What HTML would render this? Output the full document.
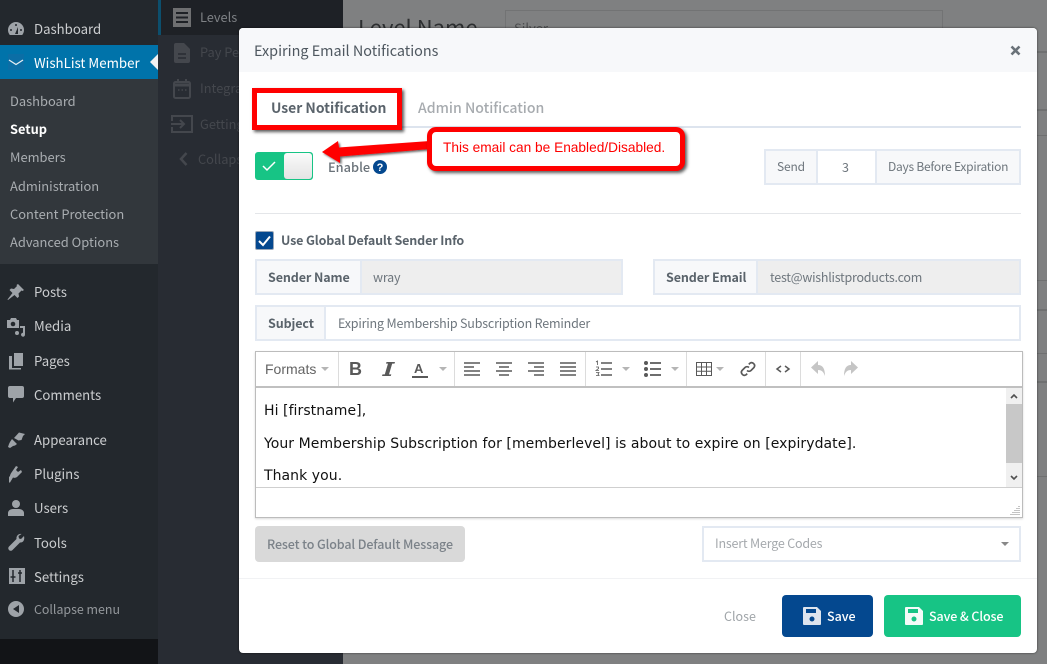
<!DOCTYPE html>
<html><head><meta charset="utf-8"><style>
html,body{margin:0;padding:0;width:1047px;height:664px;overflow:hidden;background:#7f8081}
body{position:relative;font-family:"Noto Sans CJK JP","Liberation Sans",sans-serif}
.a,.t{position:absolute}
.t{white-space:nowrap;line-height:20px}
.s{font-size:13.2px;color:#ccced0}
.u{font-size:12.9px;color:#a9adb1}
.w{font-size:12.8px;color:#44474d}
.box{position:absolute;box-sizing:border-box;border:2px solid #e3e9f2}
.lab{position:absolute;box-sizing:border-box;background:#f7f8fa;border:2px solid #e3e9f2}
.m{font-size:12.5px;color:#6e767d;letter-spacing:-.18px}
.b{font-size:12.5px;font-weight:700;color:#5a636b;letter-spacing:-.1px}
.e{position:absolute;left:264px;font-family:'DejaVu Sans',sans-serif;font-size:14px;letter-spacing:.06px;line-height:18px;color:#111;white-space:nowrap}
svg{position:absolute;overflow:visible}
</style></head><body>
<!-- background page -->
<div class="a" style="left:343px;top:0;width:704px;height:664px;background:#7f8081"></div>
<div class="t" style="left:358px;top:12px;font-size:22px;color:#2d2f31;line-height:30px">Level Name</div>
<div class="a" style="left:505px;top:10px;width:436px;height:30px;border:1px solid #727374"></div>
<div class="t" style="left:514px;top:18px;font-size:13px;color:#4d4e50">Silver</div>
<div class="a" style="left:1037px;top:51px;width:10px;height:2px;background:#6f7071"></div>
<div class="a" style="left:1037px;top:109px;width:10px;height:2px;background:#6f7071"></div>
<div class="a" style="left:1037px;top:135px;width:10px;height:1px;background:#6f7071"></div>
<div class="a" style="left:1037px;top:280px;width:10px;height:1px;background:#6f7071"></div>
<div class="a" style="left:1037px;top:309px;width:10px;height:2px;background:#6f7071"></div>
<div class="a" style="left:1037px;top:353px;width:10px;height:1px;background:#6f7071"></div>
<div class="a" style="left:1037px;top:381px;width:10px;height:2px;background:#6f7071"></div>
<div class="a" style="left:1037px;top:476px;width:10px;height:1px;background:#6f7071;"></div>
<!-- wp sidebar -->
<div class="a" style="left:0;top:0;width:158px;height:639px;background:#23282d"></div>
<div class="a" style="left:0;top:639px;width:158px;height:25px;background:#121417"></div>
<div class="a" style="left:158px;top:0;width:185px;height:664px;background:#282c33"></div>
<div class="a" style="left:158px;top:0;width:185px;height:35px;background:#1e2126"></div>
<div class="a" style="left:158px;top:0;width:3px;height:35px;background:#0c4f6d"></div>
<div class="a" style="left:0;top:45px;width:158px;height:34px;background:#0073aa"></div>
<div class="a" style="left:0;top:79px;width:158px;height:185px;background:#32373c"></div>
<svg style="left:150px;top:54px" width="8" height="16"><path d="M8 0L0 8L8 16Z" fill="#f1f1f1"/></svg>
<svg style="left:7px;top:20px" width="18" height="18" viewBox="0 0 18 18"><path d="M9 2a8 8 0 0 0-8 8c0 2 .7 3.600 1.800 5h12.400A8 8 0 0 0 17 10a8 8 0 0 0-8-8z" fill="#9ea3a8"/><path d="M8 14l3-7 0 7z" fill="#23282d"/><circle cx="4" cy="10" r="1" fill="#23282d"/><circle cx="9" cy="5" r="1" fill="#23282d"/><circle cx="14" cy="10" r="1" fill="#23282d"/></svg>
<div class="t s" style="left:34px;top:19px">Dashboard</div>
<div class="a" style="left:8px;top:54px;width:16px;height:16px;background:#0b6ea6"></div>
<svg style="left:8px;top:54px" width="16" height="16"><path d="M1 6L8 10.500L15 6" fill="none" stroke="#e6eef3" stroke-width="1.300"/></svg>
<div class="t" style="left:34px;top:53px;font-size:13.3px;color:#fff">WishList Member</div>
<div class="t u" style="left:10px;top:91px">Dashboard</div>
<div class="t" style="left:10px;top:119px;font-size:12.8px;font-weight:700;color:#fff">Setup</div>
<div class="t u" style="left:10px;top:147px">Members</div>
<div class="t u" style="left:10px;top:176px">Administration</div>
<div class="t u" style="left:10px;top:204px">Content Protection</div>
<div class="t u" style="left:10px;top:232px">Advanced Options</div>
<svg style="left:7px;top:283px" width="18" height="18" viewBox="0 0 18 18"><path d="M11 1l6 6-1.500 1-1-.5-3 3 .5 3-1.500 1.500-3-3L1 17l-.5-.5L5.500 10l-3-3L4 5.500l3 .5 3-3-.5-1z" fill="#9ea3a8"/></svg>
<svg style="left:7px;top:317px" width="19" height="19" viewBox="0 0 19 19"><path d="M0 3h3l1-2h5l1 2h2v8H0z" fill="#9ea3a8"/><circle cx="6" cy="7" r="2.300" fill="#23282d"/><path d="M13 9h5v8.500a2 2 0 1 1-2-1.800V11h-3z" fill="#9ea3a8"/><circle cx="10" cy="16" r="2" fill="#9ea3a8"/></svg>
<svg style="left:8px;top:352px" width="16" height="18" viewBox="0 0 16 18"><path d="M6 1h9v13H6z" fill="#9ea3a8"/><path d="M1 4h3v12h9v1.500H1z" fill="#9ea3a8"/></svg>
<svg style="left:8px;top:386px" width="16" height="17" viewBox="0 0 16 17"><path d="M2 0h12a2 2 0 0 1 2 2v8a2 2 0 0 1-2 2H8l-3 4.500V12H2a2 2 0 0 1-2-2V2a2 2 0 0 1 2-2z" fill="#9ea3a8"/></svg>
<svg style="left:7px;top:431px" width="18" height="18" viewBox="0 0 18 18"><path d="M7 7L12 1.500 18 3 16 5l-1.500 4-3 .5zM5 8l5 5-2 1.500-2 .5-3 2-2-1 1-3 1-2z" fill="#9ea3a8"/></svg>
<svg style="left:8px;top:465px" width="17" height="18" viewBox="0 0 17 18"><path d="M8 1l2 1-2 3 2 2 3-2 1 2-5 5c-1.500 1-3 1-4 .5L2 17.500H1V12l1-1c0-1 .5-2 1.500-3.500z" fill="#9ea3a8"/></svg>
<svg style="left:8px;top:499px" width="16" height="18" viewBox="0 0 16 18"><circle cx="8" cy="5" r="4" fill="#9ea3a8"/><path d="M0 17v-3c0-2 2-4 5-4h6c3 0 5 2 5 4v3z" fill="#9ea3a8"/></svg>
<svg style="left:8px;top:534px" width="17" height="17" viewBox="0 0 17 17"><path d="M16 2l-3 3-2-.5L10.500 2 13.500 0C11 -.5 8 1.500 8.500 5L1 12.500c-1 1-1 2.500 0 3.500s2.500 1 3.500 0L12 8.500c3 .5 5-2.500 4-6.500z" fill="#9ea3a8"/></svg>
<svg style="left:9px;top:568px" width="16" height="16" viewBox="0 0 16 16"><rect width="16" height="16" fill="#9ea3a8"/><path d="M4 2v12M4 9h-2.500M4 9h2.500M11 2v12M9 5h4" stroke="#23282d" stroke-width="1.500"/></svg>
<svg style="left:8px;top:601px" width="16" height="16" viewBox="0 0 16 16"><circle cx="8" cy="8" r="8" fill="#9ea3a8"/><path d="M11 4v8L5 8z" fill="#23282d"/></svg>
<div class="t s" style="left:34px;top:282px">Posts</div>
<div class="t s" style="left:34px;top:316px">Media</div>
<div class="t s" style="left:34px;top:351px">Pages</div>
<div class="t s" style="left:34px;top:385px">Comments</div>
<div class="t s" style="left:34px;top:430px">Appearance</div>
<div class="t s" style="left:34px;top:464px">Plugins</div>
<div class="t s" style="left:34px;top:498px">Users</div>
<div class="t s" style="left:34px;top:533px">Tools</div>
<div class="t s" style="left:34px;top:567px">Settings</div>
<div class="t s" style="left:34px;top:599px;font-size:12.4px;color:#94989c">Collapse menu</div>
<!-- wl sidebar -->
<svg style="left:173px;top:8px" width="18" height="19"><rect width="18" height="19" fill="#6e6f71"/><path d="M3 5h12M3 9.500h12M3 14h12" stroke="#1e2126" stroke-width="2"/></svg>
<div class="t w" style="left:200px;top:7px;color:#7e8185">Levels</div>
<svg style="left:174px;top:43px" width="16" height="20" viewBox="0 0 16 20"><path d="M2 0h8l6 6v12a2 2 0 0 1-2 2H2a2 2 0 0 1-2-2V2a2 2 0 0 1 2-2z" fill="#44474d"/><path d="M4 11h8M4 15h8" stroke="#282c33" stroke-width="1.500"/></svg>
<div class="t w" style="left:200px;top:42px">Pay Per</div>
<svg style="left:173px;top:79px" width="18" height="20" viewBox="0 0 18 20"><rect x="1" y="3" width="16" height="16" rx="1.500" fill="none" stroke="#44474d" stroke-width="2"/><path d="M1 6h16" stroke="#44474d" stroke-width="3"/><path d="M5 0v4M13 0v4" stroke="#44474d" stroke-width="2"/><path d="M5 11h1.500M8.500 11h1.500M12 11h1.500" stroke="#44474d" stroke-width="1.500"/></svg>
<div class="t w" style="left:200px;top:78px">Integra</div>
<svg style="left:171px;top:115px" width="22" height="18" viewBox="0 0 22 18"><path d="M1 6V1h20v16H1v-5" fill="none" stroke="#44474d" stroke-width="2"/><path d="M0 9h13M9 5l4 4-4 4" fill="none" stroke="#44474d" stroke-width="2"/></svg>
<div class="t w" style="left:200px;top:114px">Getting</div>
<svg style="left:179px;top:152px" width="9" height="14"><path d="M7.500 1L2 7l5.500 6" fill="none" stroke="#44474d" stroke-width="2.500"/></svg>
<div class="t w" style="left:198px;top:149px">Collapse</div>
<!-- modal -->
<div class="a" style="left:239px;top:28px;width:798px;height:625px;background:#fff;border-radius:4px;overflow:hidden;box-shadow:0 0 2px rgba(0,0,0,.6)">
<div class="a" style="left:0;top:0;width:798px;height:44px;background:#f7f8fa"></div>
<div class="a" style="left:0;top:550px;width:798px;height:1px;background:#f1f2f4"></div>
</div>
<div class="t" style="left:254px;top:41px;font-size:14.4px;color:#4e575f">Expiring Email Notifications</div>
<svg style="left:1010px;top:45px" width="11" height="11"><path d="M1.500 1.500l8 8M9.500 1.500l-8 8" stroke="#6a7279" stroke-width="2.600"/></svg>
<!-- tabs -->
<div class="a" style="left:255px;top:126px;width:766px;height:2px;background:#dde4ee"></div>
<div class="t" style="left:271px;top:98px;font-size:13.9px;font-weight:700;color:#5a636b">User Notification</div>
<div class="t" style="left:418px;top:98px;font-size:14.1px;color:#a7abaf;font-weight:500">Admin Notification</div>
<!-- toggle -->
<div class="a" style="left:255px;top:152px;width:58px;height:28px;box-sizing:border-box;background:#17c485;border-radius:3px;border:1px solid #17c485"></div>
<div class="a" style="left:284px;top:153px;width:28px;height:26px;background:linear-gradient(#fafafa,#e4e4e4);border-radius:3px"></div>
<svg style="left:262px;top:160px" width="14" height="12"><path d="M1 6l4 4 8-8" fill="none" stroke="#fff" stroke-width="1.500"/></svg>
<div class="t" style="left:328px;top:157px;font-size:12.8px;color:#6a7279;font-weight:500">Enable</div>
<svg style="left:373px;top:160px" width="15" height="15"><circle cx="7" cy="7" r="7" fill="#04488f"/><text x="7" y="11" text-anchor="middle" font-family="Liberation Sans" font-weight="700" font-size="11" fill="#fff">?</text></svg>
<!-- send -->
<div class="lab" style="left:764px;top:149px;width:54px;height:36px"></div>
<div class="box" style="left:816px;top:149px;width:61px;height:36px"></div>
<div class="lab" style="left:875px;top:149px;width:146px;height:36px"></div>
<div class="t m" style="left:777px;top:157px;font-size:12px">Send</div>
<div class="t m" style="left:842px;top:157px">3</div>
<div class="t m" style="left:888px;top:157px;font-size:12px;letter-spacing:-.25px">Days Before Expiration</div>
<div class="a" style="left:255px;top:213px;width:766px;height:1px;background:#e4e6e9"></div>
<!-- checkbox -->
<div class="a" style="left:255px;top:231px;width:19px;height:19px;box-sizing:border-box;background:#04488f;border:1px solid #9aa7b8;border-radius:2px"></div>
<svg style="left:258px;top:235px" width="14" height="12"><path d="M1 6l4 4 7-8.500" fill="none" stroke="#fff" stroke-width="2"/></svg>
<div class="t b" style="left:281px;top:230px;letter-spacing:-.14px">Use Global Default Sender Info</div>
<!-- sender -->
<div class="box" style="left:255px;top:259px;width:368px;height:36px;background:#eee"></div>
<div class="lab" style="left:255px;top:259px;width:107px;height:36px"></div>
<div class="t b" style="left:268px;top:267px">Sender Name</div>
<div class="t m" style="left:373px;top:267px">wray</div>
<div class="box" style="left:653px;top:259px;width:368px;height:36px;background:#eee"></div>
<div class="lab" style="left:653px;top:259px;width:105px;height:36px"></div>
<div class="t b" style="left:666px;top:267px">Sender Email</div>
<div class="t m" style="left:770px;top:267px;letter-spacing:-.25px">test@wishlistproducts.com</div>
<div class="box" style="left:255px;top:305px;width:766px;height:36px"></div>
<div class="lab" style="left:255px;top:305px;width:71px;height:36px"></div>
<div class="t b" style="left:268px;top:313px">Subject</div>
<div class="t m" style="left:338px;top:313px">Expiring Membership Subscription Reminder</div>
<!-- editor -->
<div class="a" style="left:255px;top:351px;width:768px;height:167px;box-sizing:border-box;border:1px solid #bcbcbc;box-shadow:0 1px 2px rgba(0,0,0,.15)"></div>
<div class="a" style="left:256px;top:386px;width:766px;height:2px;background:#c0c0c0"></div>
<div class="a" style="left:256px;top:487px;width:766px;height:1px;background:#cfcfcf"></div>
<div class="a" style="left:338px;top:352px;width:1px;height:34px;background:#dcdcdc"></div>
<div class="a" style="left:454px;top:352px;width:1px;height:34px;background:#dcdcdc"></div>
<div class="a" style="left:585px;top:352px;width:1px;height:34px;background:#dcdcdc"></div>
<div class="a" style="left:686px;top:352px;width:1px;height:34px;background:#dcdcdc"></div>
<div class="a" style="left:765px;top:352px;width:1px;height:34px;background:#dcdcdc"></div>
<div class="a" style="left:800px;top:352px;width:1px;height:34px;background:#dcdcdc"></div>
<div class="t" style="left:265px;top:359px;font-family:'Liberation Sans',sans-serif;font-size:14px;color:#646464">Formats</div>
<svg style="left:321px;top:367px" width="8" height="4"><path d="M0 0h8L4 4z" fill="#b5b5b5"/></svg>
<div class="t" style="left:349px;top:358px;font-family:'Liberation Sans',sans-serif;font-size:18px;font-weight:700;color:#595959;line-height:22px">B</div>
<svg style="left:382px;top:362px" width="13" height="14"><path d="M4.500 0H13l-.5 1.600H10.200L7 12.400h2.300L8.800 14H0l.5-1.600h2.300L6 1.600H4z" fill="#595959"/></svg>
<div class="t" style="left:414px;top:360px;font-family:'Liberation Sans',sans-serif;font-size:13px;font-weight:700;color:#595959;line-height:18px">A</div>
<div class="a" style="left:412px;top:376px;width:16px;height:2px;background:#595959"></div>
<svg style="left:439px;top:367px" width="8" height="4"><path d="M0 0h8L4 4z" fill="#b5b5b5"/></svg>
<svg style="left:464px;top:362px" width="17" height="14"><path d="M0 1h16M0 5h10M0 9h16M0 13h16" stroke="#595959" stroke-width="1.600"/></svg>
<svg style="left:496px;top:362px" width="17" height="14"><path d="M0 1h16M3 5h10M0 9h16M3 13h10" stroke="#595959" stroke-width="1.600"/></svg>
<svg style="left:528px;top:362px" width="17" height="14"><path d="M0 1h16M6 5h10M0 9h16M6 13h10" stroke="#595959" stroke-width="1.600"/></svg>
<svg style="left:560px;top:362px" width="17" height="14"><path d="M0 1h16M0 5h16M0 9h16M0 13h16" stroke="#595959" stroke-width="1.600"/></svg>
<svg style="left:596px;top:361px" width="16" height="16"><path d="M5 2h11M5 8h11M5 14h11" stroke="#595959" stroke-width="1.600"/><path d="M0 1l1.500-1v4M0 6h2.500v1.500L0 9.500h3M0 11.500h3l-1 1.500 1 1.500H0" fill="none" stroke="#595959" stroke-width=".8"/></svg>
<svg style="left:622px;top:367px" width="8" height="4"><path d="M0 0h8L4 4z" fill="#b5b5b5"/></svg>
<svg style="left:644px;top:361px" width="17" height="16"><path d="M6 2h11M6 8h11M6 14h11" stroke="#595959" stroke-width="1.800"/><circle cx="2" cy="2" r="2" fill="#595959"/><circle cx="2" cy="8" r="2" fill="#595959"/><circle cx="2" cy="14" r="2" fill="#595959"/></svg>
<svg style="left:671px;top:367px" width="8" height="4"><path d="M0 0h8L4 4z" fill="#b5b5b5"/></svg>
<svg style="left:696px;top:362px" width="16" height="14"><path d="M.5.5h15v13H.5zM.5 5h15M.5 9.300h15M5.500.5v13M10.500.5v13" fill="none" stroke="#595959"/></svg>
<svg style="left:716px;top:367px" width="8" height="4"><path d="M0 0h8L4 4z" fill="#b5b5b5"/></svg>
<svg style="left:740px;top:361px" width="16" height="16" viewBox="0 0 16 16"><path d="M7 9.500a3 3 0 0 0 4 0l3-3a3 3 0 0 0-4-4.300L8.800 3.400M9 6.500a3 3 0 0 0-4 0l-3 3a3 3 0 0 0 4 4.300l1.200-1.200" fill="none" stroke="#595959" stroke-width="1.700"/></svg>
<svg style="left:776px;top:365px" width="14" height="8"><path d="M5 1L1 4l4 3M9 1l4 3-4 3" fill="none" stroke="#595959" stroke-width="1.500"/></svg>
<svg style="left:811px;top:361px" width="15" height="16"><path d="M7 0v4c5 0 7 4 7 11-1.500-4-3-6-7-6v4L0 6.500z" fill="#c5c5c5"/></svg>
<svg style="left:843px;top:361px" width="15" height="16"><path d="M8 0v4c-5 0-7 4-7 11 1.500-4 3-6 7-6v4l7-6.500z" fill="#c5c5c5"/></svg>
<div class="e" style="top:402px">Hi [firstname],</div>
<div class="e" style="top:435px">Your Membership Subscription for [memberlevel] is about to expire on [expirydate].</div>
<div class="e" style="top:467px">Thank you.</div>
<div class="a" style="left:1006px;top:388px;width:16px;height:99px;background:#f0f0f0"></div>
<div class="a" style="left:1006px;top:404px;width:16px;height:59px;background:#c8c8c8"></div>
<svg style="left:1010px;top:393px" width="8" height="6"><path d="M1 5l3-3 3 3" fill="none" stroke="#505050" stroke-width="1.600"/></svg>
<svg style="left:1010px;top:475px" width="8" height="6"><path d="M1 1l3 3 3-3" fill="none" stroke="#505050" stroke-width="1.600"/></svg>
<svg style="left:1010px;top:505px" width="10" height="10"><path d="M9 1v1M7 3v1M9 3v1M5 5v1M7 5v1M9 5v1M3 7v1M5 7v1M7 7v1M9 7v1M1 9v1M3 9v1M5 9v1M7 9v1M9 9v1" stroke="#8a8a8a"/></svg>
<!-- buttons -->
<div class="a" style="left:255px;top:526px;width:210px;height:36px;background:#d9d9d9;border-radius:4px"></div>
<div class="t" style="left:267px;top:534px;font-size:12.5px;letter-spacing:-.12px;color:#7b8289;font-weight:500">Reset to Global Default Message</div>
<div class="box" style="left:702px;top:526px;width:319px;height:36px"></div>
<div class="t" style="left:715px;top:533px;font-size:12.5px;letter-spacing:-.2px;color:#a5a9ad">Insert Merge Codes</div>
<svg style="left:1001px;top:542px" width="8" height="4"><path d="M0 0h8L4 4z" fill="#888"/></svg>
<div class="t" style="left:724px;top:606px;font-size:12.5px;color:#a0a5a9">Close</div>
<div class="a" style="left:782px;top:595px;width:91px;height:42px;background:#04488f;border-radius:4px"></div>
<svg style="left:803px;top:607px" width="18" height="18"><path d="M1 0h13l4 4v13a1 1 0 0 1-1 1H1a1 1 0 0 1-1-1V1a1 1 0 0 1 1-1z" fill="#dde4ee"/><rect x="3" y="2" width="10" height="4" fill="#04488f"/><circle cx="9" cy="12" r="2.500" fill="#04488f"/></svg>
<div class="t" style="left:827px;top:606px;font-size:12.5px;color:#fff;font-weight:500">Save</div>
<div class="a" style="left:884px;top:595px;width:137px;height:42px;background:#17c485;border-radius:4px"></div>
<svg style="left:905px;top:607px" width="18" height="18"><path d="M1 0h13l4 4v13a1 1 0 0 1-1 1H1a1 1 0 0 1-1-1V1a1 1 0 0 1 1-1z" fill="#f4fbf8"/><rect x="3" y="2" width="10" height="4" fill="#17c485"/><circle cx="9" cy="12" r="2.500" fill="#17c485"/></svg>
<div class="t" style="left:929px;top:606px;font-size:12.5px;letter-spacing:-.1px;color:#fff;font-weight:500">Save &amp; Close</div>
<!-- annotations -->
<div class="a" style="left:252px;top:88px;width:150px;height:42px;box-sizing:border-box;border:5px solid #f00;box-shadow:2px 2px 3px rgba(0,0,0,.65)"></div>
<svg style="left:320px;top:138px" width="112" height="26" viewBox="0 0 112 26"><defs><filter id="f" x="-10%" y="-30%" width="120%" height="170%"><feDropShadow dx="1.500" dy="1.500" stdDeviation="1" flood-color="#000" flood-opacity=".6"/></filter></defs><path d="M2 14L18 3 19 9.500 110 3 110 11 20 18.500 20 25z" fill="#f00" filter="url(#f)"/></svg>
<div class="a" style="left:427px;top:127px;width:258px;height:44px;box-sizing:border-box;background:#fff;border:5px solid #f00;border-radius:9px;box-shadow:2px 2px 3px rgba(0,0,0,.65)"></div>
<div class="t" style="left:443px;top:138px;font-size:13.7px;color:#f00;font-family:'Liberation Sans',sans-serif">This email can be Enabled/Disabled.</div>
</body></html>
